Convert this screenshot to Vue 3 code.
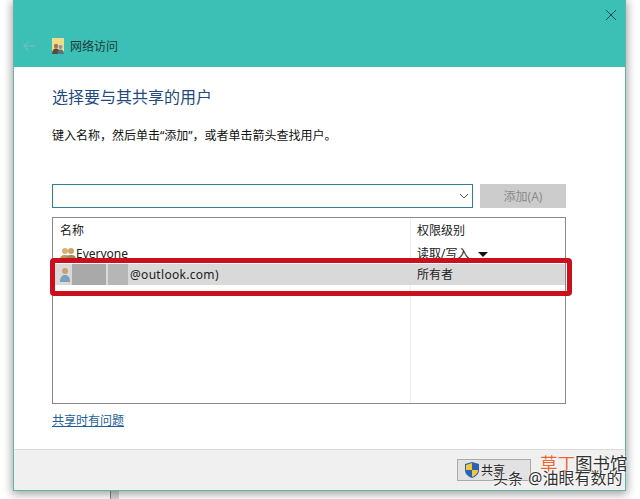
<template>
  <div class="screen">
    <div class="dialog">
      <header class="head">
        <svg class="close" viewBox="0 0 12 12" width="12" height="12">
          <path d="M1 1l10 10M11 1L1 11" stroke="#1f4a4c" stroke-width="1" fill="none" />
        </svg>
        <div class="nav">
          <svg class="back" viewBox="0 0 14 12" width="14" height="12">
            <path d="M13 6H2M6.500 1.500L2 6l4.500 4.500" stroke="#6cbfb8" stroke-width="1.300" fill="none" />
          </svg>
          <svg class="app-icon" viewBox="0 0 12 16" width="12" height="16">
            <rect width="12" height="16" fill="#f1dc8c" />
            <circle cx="4" cy="8" r="2.200" fill="#a8764c" />
            <path d="M0 16c0-4 2-5.500 4-5.500s4 1.500 4 5.500z" fill="#5a4a3a" />
            <circle cx="8.500" cy="9" r="2" fill="#8a9aa8" />
            <path d="M5.500 16c0-3 1-4.500 3-4.500s3.500 1.500 3.500 4.500z" fill="#54748c" />
          </svg>
          <span class="nav-title">网络访问</span>
        </div>
      </header>

      <main class="body">
        <h1 class="title">选择要与其共享的用户</h1>
        <p class="desc">键入名称，然后单击“添加”，或者单击箭头查找用户。</p>

        <div class="add-row">
          <div class="combo">
            <svg viewBox="0 0 10 6" width="10" height="6">
              <path d="M1 1l4 4 4-4" stroke="#555" stroke-width="1" fill="none" />
            </svg>
          </div>
          <button class="add-btn">添加(A)</button>
        </div>

        <div class="table">
          <div class="divider"></div>
          <div class="row head-row">
            <span class="name">名称</span>
            <span class="level">权限级别</span>
          </div>
          <div class="row">
            <span class="name">
              <svg class="user-icon" viewBox="0 0 16 14" width="16" height="14">
                <circle cx="5" cy="4" r="3" fill="#d9b070" />
                <circle cx="11" cy="4" r="3" fill="#c9a468" />
                <path d="M0 13c0-4 2-5 5-5s5 1 5 5z" fill="#b89a60" />
                <path d="M6 13c0-4 2-5 5-5s5 1 5 5z" fill="#a08858" />
              </svg>
              <span>Everyone</span>
            </span>
            <span class="level">读取/写入<i class="caret"></i></span>
          </div>
          <div class="row selected">
            <span class="name">
              <svg class="owner-icon" viewBox="0 0 10 15" width="10" height="15">
                <circle cx="5" cy="4" r="3" fill="#c9a070" />
                <path d="M0 15c0-5 2-7 5-7s5 2 5 7z" fill="#7f9fc0" />
              </svg>
              <span class="blur-a"></span>
              <span class="blur-b"></span>
              <span class="email">@outlook.com)</span>
            </span>
            <span class="level">所有者</span>
          </div>
        </div>

        <a class="help">共享时有问题</a>
      </main>

      <footer class="foot">
        <button class="share-btn">
          <svg viewBox="0 0 14 16" width="14" height="16">
            <path d="M7 0l7 2v6c0 4-3 6.500-7 8-4-1.500-7-4-7-8V2z" fill="#2a62b4" />
            <path d="M7 1v7H1V3zM7 8h6c0 3-2.500 5.500-6 7z" fill="#f3c63c" />
          </svg>
          <span>共享</span>
        </button>
      </footer>

      <div class="highlight"></div>
    </div>

    <div class="below"></div>

    <div class="mark-site"><span class="orange">草丁</span>图书馆</div>
    <div class="mark-author"><span>头条</span><span class="handle">@油眼有数的</span></div>
  </div>
</template>

<script setup>
</script>

<style>
body {
  margin: 0;
  background: #fff;
  overflow: hidden;
}
</style>

<style scoped>
.screen {
  position: relative;
  width: 640px;
  height: 499px;
  overflow: hidden;
  padding-left: 13px;
  box-sizing: border-box;
  font-family: "Noto Sans", "Noto Sans CJK SC", sans-serif;
  color: #222;
  font-size: 12px;
}

.dialog {
  position: relative;
  width: 613px;
  height: 491px;
  box-sizing: border-box;
  display: flex;
  flex-direction: column;
  background: #fff;
  border: 1px solid #62b5a8;
  border-top: 0;
  box-shadow: 0 2px 9px 1px rgba(0, 0, 0, 0.38);
}

.head {
  height: 67px;
  flex: none;
  background: #3cbfb4;
  display: flex;
  flex-direction: column;
  justify-content: flex-end;
  position: relative;
}

.close {
  position: absolute;
  top: 9px;
  right: 8px;
}

.nav {
  display: flex;
  align-items: center;
  height: 26px;
  margin-bottom: 8px;
  padding-left: 8px;
}

.app-icon {
  margin-left: 16px;
}

.nav-title {
  margin-left: 6px;
  font-size: 12px;
  color: #1c3c3c;
}

.body {
  flex: 1;
  padding: 0 59px 0 38px;
  display: flex;
  flex-direction: column;
}

.title {
  margin: 18px 0 0;
  font-size: 16px;
  line-height: 24px;
  font-weight: 400;
  color: #1f4a80;
}

.desc {
  margin: 18px 0 0;
  font-size: 12px;
  line-height: 18px;
  color: #111;
}

.add-row {
  margin-top: 39px;
  display: flex;
  gap: 7px;
  height: 24px;
}

.combo {
  width: 421px;
  box-sizing: border-box;
  border: 1px solid #2f7f95;
  display: flex;
  align-items: center;
  justify-content: flex-end;
  padding-right: 3px;
}

.add-btn {
  flex: 1;
  border: 0;
  padding: 0;
  background: #cccccc;
  color: #8a8a8a;
  font: inherit;
}

.table {
  position: relative;
  margin-top: 9px;
  height: 187px;
  box-sizing: border-box;
  border: 1px solid #8a8a8a;
  overflow: hidden;
}

.divider {
  position: absolute;
  top: 0;
  bottom: 0;
  left: 357px;
  width: 1px;
  background: #eee;
}

.row {
  position: relative;
  display: flex;
  align-items: center;
  height: 24px;
  line-height: 24px;
}

.head-row {
  box-sizing: border-box;
  padding-top: 2px;
}

.row.selected {
  height: 21px;
  margin-top: -2px;
  background: #d9d9d9;
}

.name {
  width: 358px;
  box-sizing: border-box;
  padding-left: 7px;
  display: flex;
  align-items: center;
}

.level {
  padding-left: 6px;
  display: flex;
  align-items: center;
}

.owner-icon {
  margin-right: 2px;
}

.email {
  letter-spacing: 0.3px;
}

.caret {
  width: 0;
  height: 0;
  margin-left: 9px;
  border-left: 5px solid transparent;
  border-right: 5px solid transparent;
  border-top: 5px solid #111;
}

.blur-a {
  width: 34px;
  height: 21px;
  background: #a9a9a9;
}

.blur-b {
  width: 20px;
  height: 21px;
  margin: 0 2px;
  background: #b6b6b6;
}

.help {
  margin-top: 8px;
  line-height: 18px;
  align-self: flex-start;
  color: #1d5f98;
  text-decoration: underline;
}

.foot {
  height: 41px;
  flex: none;
  box-sizing: border-box;
  background: #f0f0f0;
  border-top: 1px solid #dcdcdc;
  display: flex;
  justify-content: flex-end;
  padding: 9px 94px 0 0;
}

.share-btn {
  width: 74px;
  height: 22px;
  box-sizing: border-box;
  border: 1px solid #aaa;
  background: #e2e2e2;
  padding: 0 0 0 7px;
  display: flex;
  align-items: center;
  gap: 2px;
  font: inherit;
  color: #222;
}

.highlight {
  position: absolute;
  left: 36px;
  top: 258px;
  width: 522px;
  height: 38px;
  box-sizing: border-box;
  border: 5px solid #cc0f1c;
  border-radius: 4px;
}

.below {
  width: 8px;
  height: 8px;
  margin-left: 97px;
  background: #d8d8d8;
  border-left: 1px solid #888;
}

.mark-site {
  position: absolute;
  left: 540px;
  top: 451px;
  font-size: 17.500px;
  line-height: 24px;
  color: #333;
  text-shadow: 0 0 2px #fff, 0 0 2px #fff;
}

.orange {
  color: #f0642c;
}

.mark-author {
  position: absolute;
  left: 493px;
  top: 467px;
  font-size: 15px;
  line-height: 22px;
  color: #333;
  text-shadow: 0 0 2px #fff, 0 0 2px #fff;
  white-space: nowrap;
  display: flex;
  gap: 5px;
}

.handle {
  font-size: 16px;
}
</style>
